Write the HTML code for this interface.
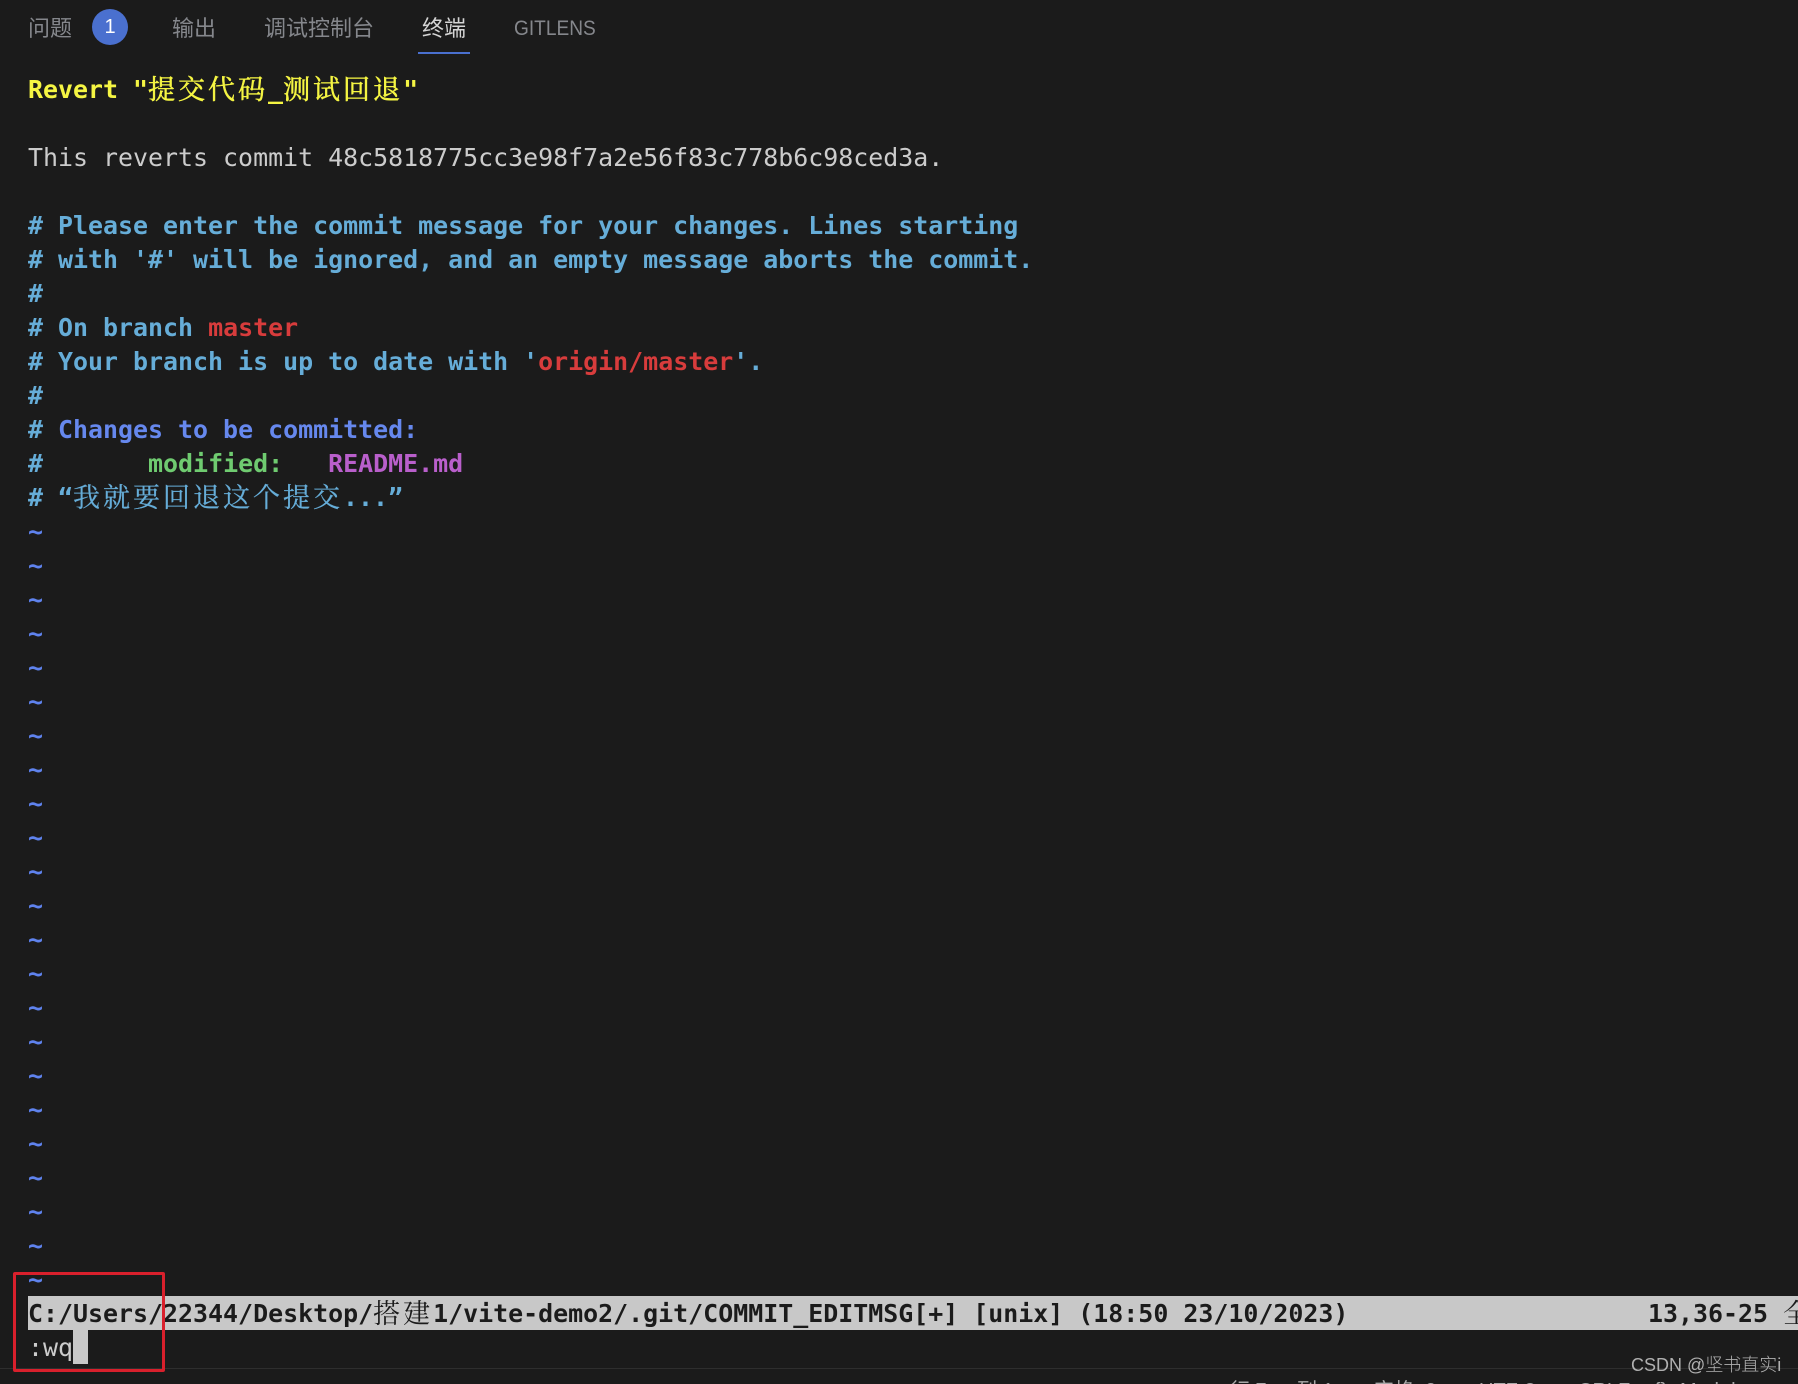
<!DOCTYPE html>
<html lang="zh-CN">
<head>
<meta charset="utf-8">
<title>Terminal</title>
<style>
html,body{margin:0;padding:0;background:#1b1b1b;}
#s{position:relative;width:1798px;height:1384px;overflow:hidden;background:#1b1b1b;}
.tab{position:absolute;top:13px;height:32px;font:400 22px/32px "Liberation Sans","Noto Sans CJK SC",sans-serif;color:#85878c;white-space:nowrap;}
.l{position:absolute;left:28px;height:34px;line-height:34px;font-family:"DejaVu Sans Mono","Liberation Mono",monospace;font-size:24.93px;white-space:pre;color:#cccccc;}
.b{font-weight:700;}
.c{font-family:"Noto Serif CJK SC","Liberation Serif",serif;font-size:27px;letter-spacing:3px;line-height:0;font-weight:400;position:relative;top:1px;}
.s1{-webkit-text-stroke:.5px currentColor;}
.s2{-webkit-text-stroke:.25px currentColor;}
.k{color:#66add8;}
.y{color:#f5f543;}
.r{color:#d83c3c;}
.u{color:#6688ee;}
.g{color:#6fcb70;}
.m{color:#b95fcb;}
.t{color:#5f83ee;font-weight:700;}
.f{position:absolute;top:1377px;font:400 20px/28px 'Liberation Sans','Noto Sans CJK SC',sans-serif;color:#a8a8a8;white-space:pre;}
</style>
</head>
<body>
<div id="s">
<div class="tab" style="left:28px;">问题</div>
<div style="position:absolute;left:92px;top:9px;width:36px;height:36px;border-radius:50%;background:#4a70cf;color:#fff;font:20px/36px 'Liberation Sans',sans-serif;text-align:center;">1</div>
<div class="tab" style="left:172px;">输出</div>
<div class="tab" style="left:264px;">调试控制台</div>
<div class="tab" style="left:422px;color:#d5d5d5;">终端</div>
<div style="position:absolute;left:418px;top:52px;width:52px;height:2px;background:#4a70cf;"></div>
<div class="tab" style="left:514px;font-size:21px;transform:scaleX(.91);transform-origin:left center;">GITLENS</div>

<div class="l b y" style="top:73px;">Revert "<span class="c s1">提交代码</span>_<span class="c s1">测试回退</span>"</div>
<div class="l" style="top:141px;">This reverts commit 48c5818775cc3e98f7a2e56f83c778b6c98ced3a.</div>
<div class="l b k" style="top:209px;"># Please enter the commit message for your changes. Lines starting</div>
<div class="l b k" style="top:243px;"># with '#' will be ignored, and an empty message aborts the commit.</div>
<div class="l b k" style="top:277px;">#</div>
<div class="l b k" style="top:311px;"># On branch <span class="r">master</span></div>
<div class="l b k" style="top:345px;"># Your branch is up to date with '<span class="r">origin/master</span>'.</div>
<div class="l b k" style="top:379px;">#</div>
<div class="l b k" style="top:413px;"># <span class="u">Changes to be committed:</span></div>
<div class="l b k" style="top:447px;">#       <span class="g">modified:</span>   <span class="m">README.md</span></div>
<div class="l b k" style="top:481px;"># “<span class="c s2">我就要回退这个提交</span>...”</div>

<div class="l t" style="top:515px;">~</div>
<div class="l t" style="top:549px;">~</div>
<div class="l t" style="top:583px;">~</div>
<div class="l t" style="top:617px;">~</div>
<div class="l t" style="top:651px;">~</div>
<div class="l t" style="top:685px;">~</div>
<div class="l t" style="top:719px;">~</div>
<div class="l t" style="top:753px;">~</div>
<div class="l t" style="top:787px;">~</div>
<div class="l t" style="top:821px;">~</div>
<div class="l t" style="top:855px;">~</div>
<div class="l t" style="top:889px;">~</div>
<div class="l t" style="top:923px;">~</div>
<div class="l t" style="top:957px;">~</div>
<div class="l t" style="top:991px;">~</div>
<div class="l t" style="top:1025px;">~</div>
<div class="l t" style="top:1059px;">~</div>
<div class="l t" style="top:1093px;">~</div>
<div class="l t" style="top:1127px;">~</div>
<div class="l t" style="top:1161px;">~</div>
<div class="l t" style="top:1195px;">~</div>
<div class="l t" style="top:1229px;">~</div>
<div class="l t" style="top:1263px;">~</div>

<div style="position:absolute;left:28px;top:1296px;width:1770px;height:34px;background:#c8c8c8;"></div>
<div class="l b" style="top:1297px;color:#1b1b1b;">C:/Users/22344/Desktop/<span class="c">搭建</span>1/vite-demo2/.git/COMMIT_EDITMSG[+] [unix] (18:50 23/10/2023)</div>
<div class="l b" style="top:1297px;left:1648px;color:#1b1b1b;">13,36-25 <span class="c">全</span></div>

<div class="l" style="top:1331px;">:wq</div>
<div style="position:absolute;left:73px;top:1330px;width:15px;height:34px;background:#c8c8c8;"></div>

<div style="position:absolute;left:0;top:1368px;width:1798px;height:1px;background:#2e2e2e;"></div>
<div class="f" style="left:1230px;">行 7，</div>
<div class="f" style="left:1297px;">列 1</div>
<div class="f" style="left:1374px;">空格: 2</div>
<div class="f" style="left:1479px;">UTF-8</div>
<div class="f" style="left:1578px;">CRLF</div>
<div class="f" style="left:1654px;">{}</div>
<div class="f" style="left:1680px;">Markdown</div>

<div style="position:absolute;left:13px;top:1272px;width:146px;height:94px;border:3.5px solid #d9202c;border-radius:2px;"></div>

<div style="position:absolute;left:1631px;top:1352px;font:300 18px/26px 'Liberation Sans','Noto Sans CJK SC',sans-serif;color:#b0b0b0;white-space:pre;">CSDN @坚书直实i</div>
</div>
</body>
</html>
